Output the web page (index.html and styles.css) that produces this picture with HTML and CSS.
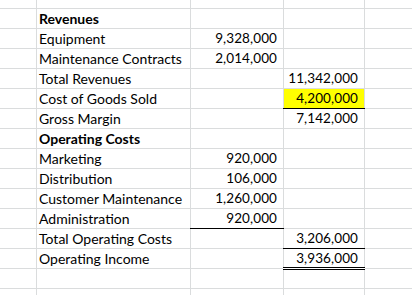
FILE: index.html
```html
<!DOCTYPE html>
<html>
<head>
<meta charset="utf-8">
<link rel="stylesheet" href="styles.css">
</head>
<body>
<div class="sheet">
  <div class="c"></div><div class="c"></div><div class="c"></div><div class="c"></div><div class="c"></div>

  <div class="c"></div><div class="c lbl bold">Revenues</div><div class="c"></div><div class="c"></div><div class="c"></div>
  <div class="c"></div><div class="c lbl">Equipment</div><div class="c num">9,328,000</div><div class="c"></div><div class="c"></div>
  <div class="c"></div><div class="c lbl">Maintenance Contracts</div><div class="c num">2,014,000</div><div class="c"></div><div class="c"></div>
  <div class="c"></div><div class="c lbl">Total Revenues</div><div class="c"></div><div class="c num">11,342,000</div><div class="c"></div>
  <div class="c"></div><div class="c lbl">Cost of Goods Sold</div><div class="c"></div><div class="c num hl line-bottom">4,200,000</div><div class="c"></div>
  <div class="c"></div><div class="c lbl">Gross Margin</div><div class="c"></div><div class="c num">7,142,000</div><div class="c"></div>
  <div class="c"></div><div class="c lbl bold">Operating Costs</div><div class="c"></div><div class="c"></div><div class="c"></div>
  <div class="c"></div><div class="c lbl">Marketing</div><div class="c num">920,000</div><div class="c"></div><div class="c"></div>
  <div class="c"></div><div class="c lbl">Distribution</div><div class="c num">106,000</div><div class="c"></div><div class="c"></div>
  <div class="c"></div><div class="c lbl">Customer Maintenance</div><div class="c num">1,260,000</div><div class="c"></div><div class="c"></div>
  <div class="c"></div><div class="c lbl">Administration</div><div class="c num line-bottom">920,000</div><div class="c"></div><div class="c"></div>
  <div class="c"></div><div class="c lbl">Total Operating Costs</div><div class="c"></div><div class="c num line-bottom">3,206,000</div><div class="c"></div>
  <div class="c"></div><div class="c lbl">Operating Income</div><div class="c"></div><div class="c num double-bottom">3,936,000</div><div class="c"></div>

  <div class="c"></div><div class="c"></div><div class="c"></div><div class="c"></div><div class="c"></div>
  <div class="c"></div><div class="c"></div><div class="c"></div><div class="c"></div><div class="c"></div>
</div>
</body>
</html>
```

FILE: styles.css
```css
html, body {
  margin: 0;
  padding: 0;
  background: #fff;
  overflow: hidden;
}

.sheet {
  display: grid;
  grid-template-columns: 36px 153px 92px 80px 1fr;
  grid-template-rows: 8px repeat(15, 19px);
  gap: 1px;
  width: 412px;
  background: #dadcdd;
  font-family: Lato, "Liberation Sans", sans-serif;
  font-size: 14px;
  color: #000;
}

.c {
  background: #fff;
  line-height: 19px;
  white-space: nowrap;
  position: relative;
}

.lbl {
  padding-left: 2px;
}

.bold {
  font-weight: bold;
}

.num {
  text-align: right;
  padding-right: 6px;
  font-size: 13.5px;
  letter-spacing: 0.1px;
}

.hl {
  background: #ffff00;
}

.line-bottom::after {
  content: "";
  position: absolute;
  left: -1px;
  right: -1px;
  bottom: -1px;
  height: 1px;
  background: #000;
  z-index: 1;
}

.double-bottom::after {
  content: "";
  position: absolute;
  left: -1px;
  right: -1px;
  bottom: -2px;
  height: 1px;
  border-top: 1px solid #000;
  border-bottom: 1px solid #000;
  background: #fff;
  z-index: 1;
}
```
